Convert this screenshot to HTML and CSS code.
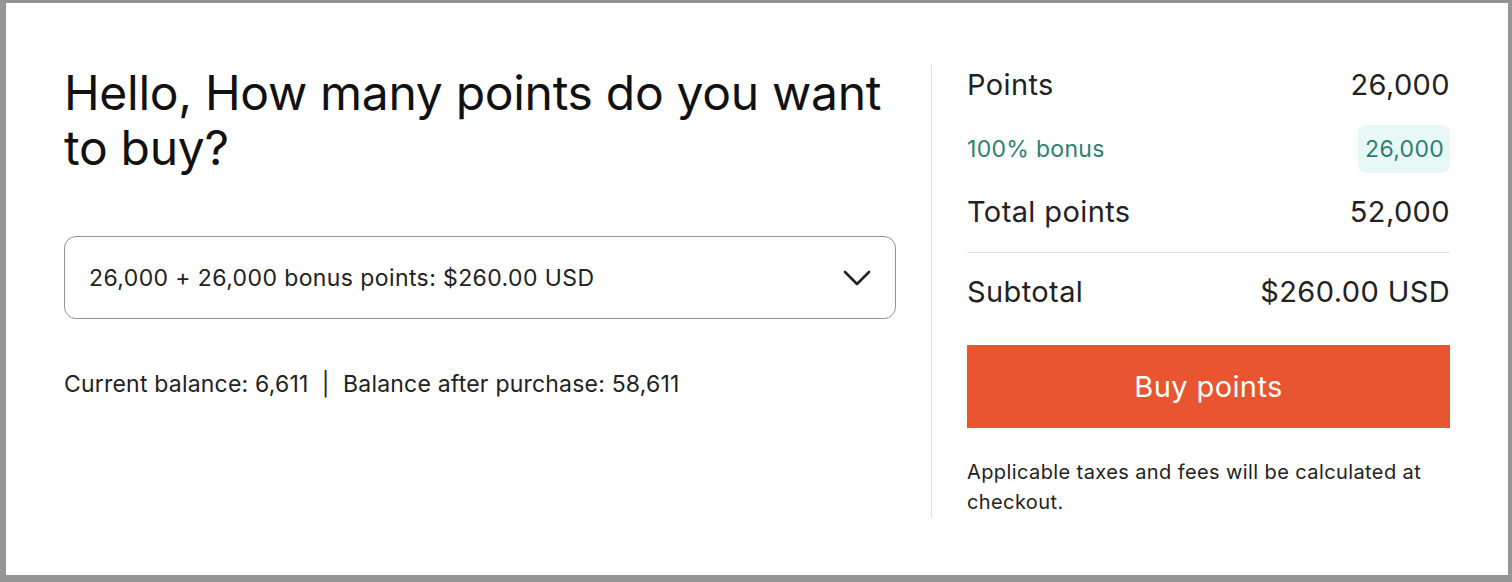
FILE: index.html
```html
<!DOCTYPE html>
<html lang="en">
<head>
    <meta charset="UTF-8">
    <meta name="viewport" content="width=device-width, initial-scale=1.0">
    <title>Buy points</title>
    <link rel="stylesheet" href="styles.css">
</head>
<body>
    <div class="panel">
        <!-- Left side: choose a package -->
        <div class="choose">
            <h1>Hello, How many points do you want to buy?</h1>

            <div class="select">
                <span>26,000 + 26,000 bonus points: $260.00 USD</span>
                <svg class="chevron" width="28" height="18" viewBox="0 0 28 18">
                    <path d="M2 3 L14 15 L26 3" fill="none" stroke="#222" stroke-width="2.6" stroke-linecap="round" stroke-linejoin="round"/>
                </svg>
            </div>

            <p class="balance">Current balance: 6,611 &nbsp;|&nbsp; Balance after purchase: 58,611</p>
        </div>

        <!-- Right side: summary -->
        <div class="summary">
            <div class="row">
                <span>Points</span>
                <span>26,000</span>
            </div>
            <div class="row bonus">
                <span>100% bonus</span>
                <span class="badge">26,000</span>
            </div>
            <div class="row total">
                <span>Total points</span>
                <span>52,000</span>
            </div>
            <div class="row subtotal">
                <span>Subtotal</span>
                <span>$260.00 USD</span>
            </div>
            <a href="#" class="buy-button">Buy points</a>
            <p class="note">Applicable taxes and fees will be calculated at checkout.</p>
        </div>
    </div>
</body>
</html>
```

FILE: styles.css
```css
/* Reset default browser styles */
* {
    margin: 0;
    padding: 0;
    box-sizing: border-box;
}

body {
    background-color: #959595;
    padding: 3px 4px 7px 6px;
    font-family: Inter, "Noto Sans", sans-serif;
    color: #222;
}

/* White card */
.panel {
    background-color: #fff;
    height: 572px;
    display: flex;
    padding: 62px 58px 0 58px;
}

/* Left column */
.choose {
    flex: 1;
    padding-right: 35px;
}

.choose h1 {
    font-size: 48px;
    font-weight: 400;
    line-height: 55px;
    letter-spacing: -0.3px;
    color: #111;
}

.select {
    margin-top: 61px;
    height: 83px;
    border: 1px solid #8e929c;
    border-radius: 12px;
    display: flex;
    align-items: center;
    justify-content: space-between;
    padding: 0 24px 0 24px;
    font-size: 23px;
    letter-spacing: 0.4px;
}

.balance {
    margin-top: 51px;
    font-size: 23px;
    letter-spacing: 0.2px;
}

/* Right column */
.summary {
    width: 519px;
    height: 453px;
    border-left: 1px solid #e1e1e1;
    padding-left: 35px;
}

.row {
    display: flex;
    justify-content: space-between;
    align-items: center;
    font-size: 29px;
    line-height: 40px;
    letter-spacing: 0.4px;
}

.row.bonus {
    font-size: 23px;
    color: #2d7f74;
    margin-top: 20px;
    letter-spacing: 0.3px;
}

.badge {
    background-color: #e8f8f6;
    border-radius: 8px;
    padding: 0 6px 0 7px;
    line-height: 48px;
}

.row.total {
    margin-top: 19px;
    padding-bottom: 20px;
    border-bottom: 1px solid #e1e1e1;
}

.row.subtotal {
    margin-top: 19px;
}

.buy-button {
    display: block;
    margin-top: 33px;
    height: 83px;
    line-height: 83px;
    background-color: #e85530;
    color: #fff;
    text-align: center;
    text-decoration: none;
    font-size: 29px;
    letter-spacing: 0.4px;
}

.note {
    margin-top: 29px;
    font-size: 20px;
    line-height: 30px;
    letter-spacing: 0.4px;
}
```
